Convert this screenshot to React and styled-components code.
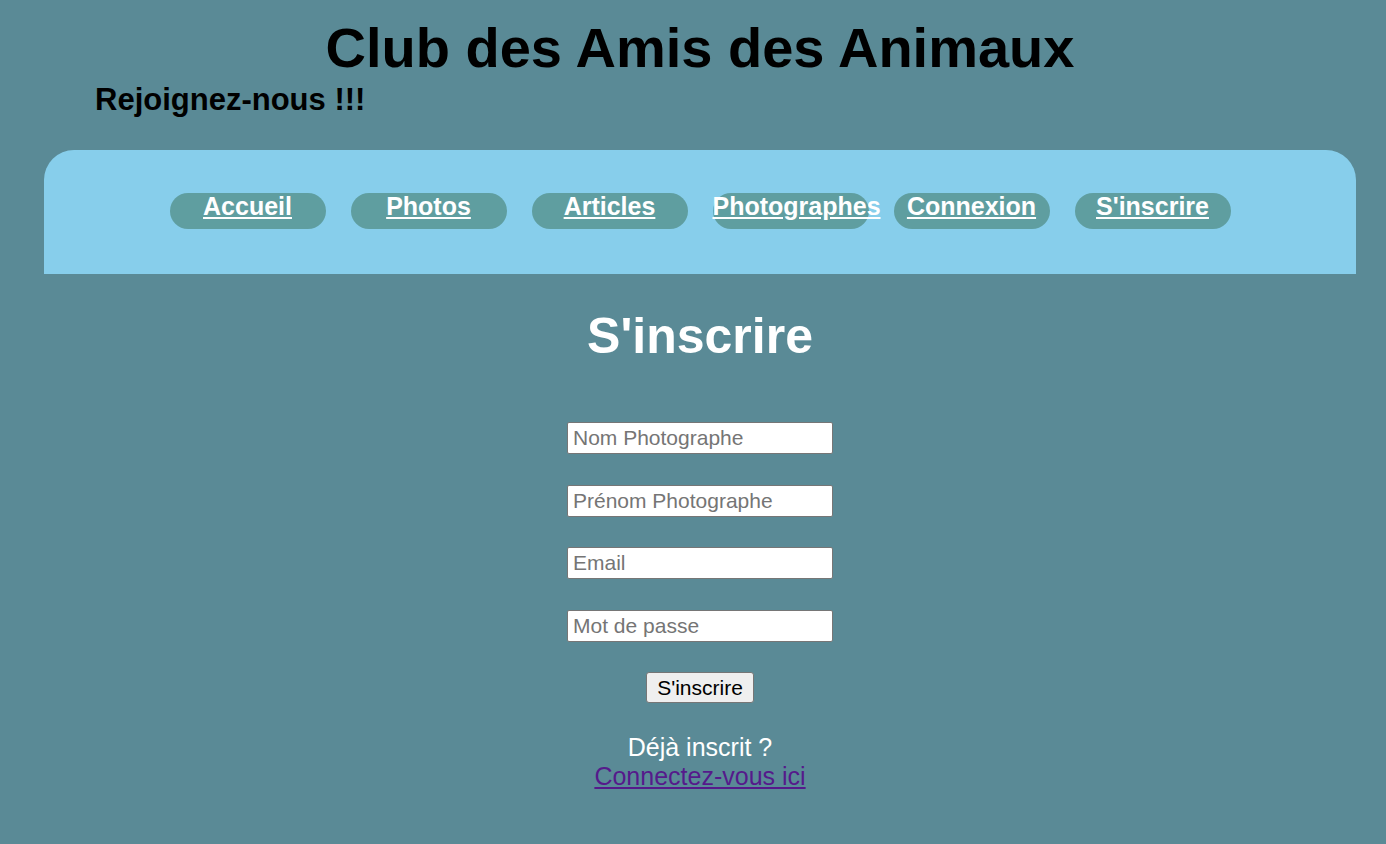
import React from 'react';
import styled, { createGlobalStyle } from 'styled-components';

const colors = {
  page: '#5a8a96',
  nav: '#87ceeb',
  pill: '#5f9ea0',
  white: '#ffffff',
  visited: '#551a8b',
};

const GlobalStyle = createGlobalStyle`
  body {
    margin: 8px;
    background-color: ${colors.page};
    font-family: "Liberation Sans", Arial, sans-serif;
  }
`;

const Page = styled.div`
  padding: 0 22px 0 36px;
  flex-direction: column;
  display: flex;
`;

const Header = styled.header`
  padding-top: 8px;
  flex-direction: column;
  display: flex;
`;

const Title = styled.h1`
  margin: 0;
  font-size: 56px;
  line-height: 64px;
  font-weight: bold;
  text-align: center;
  color: #000;
`;

const Subtitle = styled.h2`
  margin: 4px 0 0 51px;
  font-size: 31px;
  line-height: 32px;
  font-weight: bold;
  color: #000;
`;

const Nav = styled.nav`
  margin-top: 34px;
  height: 124px;
  padding-bottom: 2px;
  box-sizing: border-box;
  background-color: ${colors.nav};
  border-radius: 30px 30px 0 0;
  justify-content: center;
  align-items: center;
  flex-direction: row;
  display: flex;
  gap: 25px;
`;

const Pill = styled.a`
  width: 156px;
  height: 36px;
  box-sizing: border-box;
  background-color: ${colors.pill};
  border-radius: 18px;
  color: ${colors.white};
  font-size: 25px;
  line-height: 26px;
  font-weight: bold;
  text-align: center;
  text-decoration: underline;
  white-space: nowrap;
  cursor: pointer;
`;

const Main = styled.main`
  align-items: center;
  flex-direction: column;
  display: flex;
`;

const Heading = styled.h2`
  margin: 33px 0 57px;
  font-size: 50px;
  line-height: 58px;
  font-weight: bold;
  color: ${colors.white};
`;

const Form = styled.form`
  align-items: center;
  flex-direction: column;
  display: flex;
  gap: 30.5px;
`;

const Field = styled.input`
  width: 266px;
  height: 32px;
  box-sizing: border-box;
  padding: 1px 5px;
  border: 1px solid #767676;
  border-radius: 2px;
  background: #fff;
  font-family: "Liberation Sans", Arial, sans-serif;
  font-size: 21px;
  color: #000;

  &::placeholder {
    color: #757575;
  }
`;

const Submit = styled.button`
  width: 108px;
  height: 31px;
  box-sizing: border-box;
  border: 1px solid #767676;
  border-radius: 3px;
  background-color: #efefef;
  font-family: "Liberation Sans", Arial, sans-serif;
  font-size: 21px;
  color: #000;
  padding: 0;
`;

const Footer = styled.p`
  margin: 30px 0 0;
  font-size: 25px;
  line-height: 29px;
  text-align: center;
  color: ${colors.white};
`;

const Link = styled.a`
  color: ${colors.visited};
  text-decoration: underline;
`;

const links = ['Accueil', 'Photos', 'Articles', 'Photographes', 'Connexion', "S'inscrire"];

const fields = [
  { type: 'text', placeholder: 'Nom Photographe' },
  { type: 'text', placeholder: 'Prénom Photographe' },
  { type: 'email', placeholder: 'Email' },
  { type: 'password', placeholder: 'Mot de passe' },
];

export default function App() {
  return (
    <Page>
      <GlobalStyle />
      <Header>
        <Title>Club des Amis des Animaux</Title>
        <Subtitle>Rejoignez-nous !!!</Subtitle>
      </Header>
      <Nav>
        {links.map(label => (
          <Pill key={label}>{label}</Pill>
        ))}
      </Nav>
      <Main>
        <Heading>S'inscrire</Heading>
        <Form onSubmit={e => e.preventDefault()}>
          {fields.map(field => (
            <Field key={field.placeholder} {...field} />
          ))}
          <Submit type="submit">S'inscrire</Submit>
        </Form>
        <Footer>
          Déjà inscrit ?<br />
          <Link>Connectez-vous ici</Link>
        </Footer>
      </Main>
    </Page>
  );
}
